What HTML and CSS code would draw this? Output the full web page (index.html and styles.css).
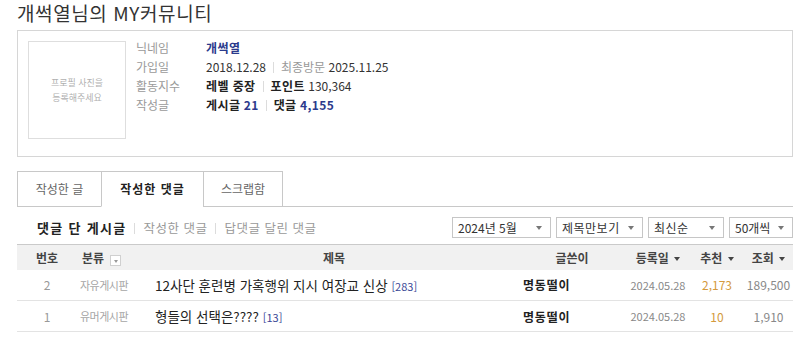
FILE: index.html
```html
<!DOCTYPE html>
<html lang="ko">
<head>
    <meta charset="UTF-8">
    <meta name="viewport" content="width=device-width, initial-scale=1.0">
    <title>개썩열님의 MY커뮤니티</title>
    <link rel="stylesheet" href="styles.css">
</head>
<body>
    <div class="container">
        <h1 class="page-title">개썩열님의 MY커뮤니티</h1>

        <div class="profile-box">
            <div class="photo">프로필 사진을<br>등록해주세요</div>
            <ul class="info">
                <li><span class="label">닉네임</span><span class="value"><b class="navy">개썩열</b></span></li>
                <li><span class="label">가입일</span><span class="value">2018.12.28<i class="sep"></i><span class="muted">최종방문</span> 2025.11.25</span></li>
                <li><span class="label">활동지수</span><span class="value"><b>레벨 중장</b><i class="sep"></i><b>포인트</b> 130,364</span></li>
                <li><span class="label">작성글</span><span class="value"><b>게시글</b> <b class="navy">21</b><i class="sep"></i><b>댓글</b> <b class="navy">4,155</b></span></li>
            </ul>
        </div>

        <ul class="tabs">
            <li class="tab tab-posts">작성한 글</li>
            <li class="tab tab-comments active">작성한 댓글</li>
            <li class="tab tab-scrap">스크랩함</li>
        </ul>

        <div class="toolbar">
            <div class="subnav">
                <b class="current">댓글 단 게시글</b><i class="sep"></i><span>작성한 댓글</span><i class="sep"></i><span>답댓글 달린 댓글</span>
            </div>
            <div class="selects">
                <div class="select sel-month">2024년 5월<i class="arrow"></i></div>
                <div class="select sel-view">제목만보기<i class="arrow"></i></div>
                <div class="select sel-sort">최신순<i class="arrow"></i></div>
                <div class="select sel-count">50개씩<i class="arrow"></i></div>
            </div>
        </div>

        <table class="list">
            <colgroup>
                <col class="c-num"><col class="c-cat"><col class="c-title"><col class="c-writer"><col class="c-date"><col class="c-rec"><col class="c-view">
            </colgroup>
            <thead>
                <tr>
                    <th>번호</th>
                    <th class="cat">분류 <i class="cat-btn"><i class="caret small"></i></i></th>
                    <th>제목</th>
                    <th>글쓴이</th>
                    <th>등록일 <i class="caret"></i></th>
                    <th>추천 <i class="caret"></i></th>
                    <th>조회 <i class="caret"></i></th>
                </tr>
            </thead>
            <tbody>
                <tr>
                    <td class="num">2</td>
                    <td class="cat">자유게시판</td>
                    <td class="title">12사단 훈련병 가혹행위 지시 여장교 신상 <span class="cmt">[283]</span></td>
                    <td class="writer">명동떨이</td>
                    <td class="date">2024.05.28</td>
                    <td class="rec">2,173</td>
                    <td class="view">189,500</td>
                </tr>
                <tr>
                    <td class="num">1</td>
                    <td class="cat">유머게시판</td>
                    <td class="title">형들의 선택은???? <span class="cmt">[13]</span></td>
                    <td class="writer">명동떨이</td>
                    <td class="date">2024.05.28</td>
                    <td class="rec">10</td>
                    <td class="view">1,910</td>
                </tr>
            </tbody>
        </table>
    </div>
</body>
</html>
```

FILE: styles.css
```css
* {
    box-sizing: border-box;
}

body {
    margin: 0;
    background: #fff;
    font-family: "Noto Sans CJK KR", "Noto Sans", sans-serif;
    font-size: 12px;
    color: #333;
}

.container {
    width: 776px;
    margin-left: 17px;
}

.page-title {
    margin: 0 0 5px;
    height: 25px;
    font-size: 19px;
    font-weight: 400;
    line-height: 25px;
    color: #333;
    letter-spacing: 0.6px;
}

/* profile */
.profile-box {
    display: flex;
    height: 127px;
    border: 1px solid #d6d6d6;
    padding: 10px;
}

.photo {
    width: 98px;
    height: 98px;
    border: 1px solid #dedede;
    display: flex;
    align-items: center;
    justify-content: center;
    text-align: center;
    font-size: 9px;
    line-height: 15px;
    color: #b0b0b0;
}

.info {
    list-style: none;
    margin: -3px 0 0 10px;
    padding: 0;
}

.info li {
    display: flex;
    height: 19px;
    line-height: 19px;
}

.label {
    width: 70px;
    color: #9a9a9a;
}

.value {
    color: #333;
}

.value b {
    color: #222;
    letter-spacing: 0.4px;
}

.value .navy,
.navy {
    color: #2b3a8c;
}

.muted {
    color: #999;
}

.sep {
    display: inline-block;
    width: 1px;
    height: 11px;
    background: #dcdcdc;
    margin: 0 7px;
    vertical-align: -1px;
}

/* tabs */
.tabs {
    display: flex;
    list-style: none;
    margin: 14px 0 0;
    padding: 0;
    border-bottom: 1px solid #c8c8c8;
}

.tab {
    height: 36px;
    margin-bottom: -1px;
    border: 1px solid #c8c8c8;
    border-right: none;
    background: #fff;
    color: #666;
    font-size: 12px;
    line-height: 34px;
    text-align: center;
}

.tab-posts { width: 84px; }
.tab-comments { width: 102px; }
.tab-scrap { width: 80px; border-right: 1px solid #c8c8c8; }

.tab.active {
    border-bottom-color: #fff;
    color: #222;
    font-weight: bold;
    letter-spacing: 1px;
}

/* toolbar */
.toolbar {
    display: flex;
    justify-content: space-between;
    align-items: center;
    height: 21px;
    margin-top: 10px;
}

.subnav {
    padding-left: 20px;
    font-size: 12.5px;
    color: #999;
    letter-spacing: 0.5px;
}

.subnav .current {
    color: #222;
    font-size: 13px;
    letter-spacing: 1.3px;
}

.subnav .sep {
    margin: 0 8px;
}

.selects {
    display: flex;
    gap: 5px;
}

.select {
    position: relative;
    height: 21px;
    border: 1px solid #c6c6c6;
    padding-left: 5px;
    font-size: 12px;
    line-height: 19px;
    color: #333;
    background: #fff;
}

.sel-month { width: 99px; }
.sel-view { width: 87px; letter-spacing: 0.5px; }
.sel-sort { width: 76px; letter-spacing: 0.5px; }
.sel-count { width: 64px; }

.arrow {
    position: absolute;
    right: 8px;
    top: 8px;
    border-left: 3px solid transparent;
    border-right: 3px solid transparent;
    border-top: 4px solid #777;
}

/* list */
.list {
    width: 776px;
    margin-top: 6px;
    border-collapse: collapse;
    table-layout: fixed;
}

.c-num { width: 60px; }
.c-cat { width: 73px; }
.c-title { width: 368px; }
.c-writer { width: 108px; }
.c-date { width: 64px; }
.c-rec { width: 54px; }
.c-view { width: 49px; }

.list th {
    height: 25px;
    padding: 0;
    background: #f1f1f1;
    border-top: 1px solid #cacaca;
    font-size: 12px;
    font-weight: bold;
    color: #444;
    text-align: center;
    white-space: nowrap;
}

.list th.cat {
    text-align: left;
    padding-left: 5px;
}

.caret {
    display: inline-block;
    margin-left: 2px;
    vertical-align: 2px;
    border-left: 3px solid transparent;
    border-right: 3px solid transparent;
    border-top: 4px solid #444;
}

.cat-btn {
    display: inline-block;
    width: 11px;
    height: 11px;
    margin-left: 3px;
    border: 1px solid #d0d0d0;
    background: #fff;
    vertical-align: -1px;
    text-align: center;
    line-height: 6px;
}

.caret.small {
    margin: 0;
    vertical-align: 1px;
    border-left-width: 2px;
    border-right-width: 2px;
    border-top: 3px solid #999;
}

.list td {
    height: 31px;
    padding: 0;
    border-bottom: 1px solid #e3e3e3;
    text-align: center;
    white-space: nowrap;
    color: #888;
}

.list td.num {
    color: #999;
}

.list td.cat {
    text-align: left;
    padding-left: 3px;
    font-size: 11px;
    letter-spacing: -0.5px;
    color: #a5a5a5;
}

.list td.title {
    text-align: left;
    padding-left: 5px;
    font-size: 13.5px;
    color: #222;
}

.cmt {
    font-size: 11px;
    color: #3a4896;
}

.list td.writer {
    text-align: left;
    padding-left: 5px;
    font-weight: bold;
    letter-spacing: 0.8px;
    color: #222;
}

.list td.date {
    font-size: 11px;
}

.list td.rec {
    color: #d49a3c;
}

.list td.view {
    color: #888;
}
```
